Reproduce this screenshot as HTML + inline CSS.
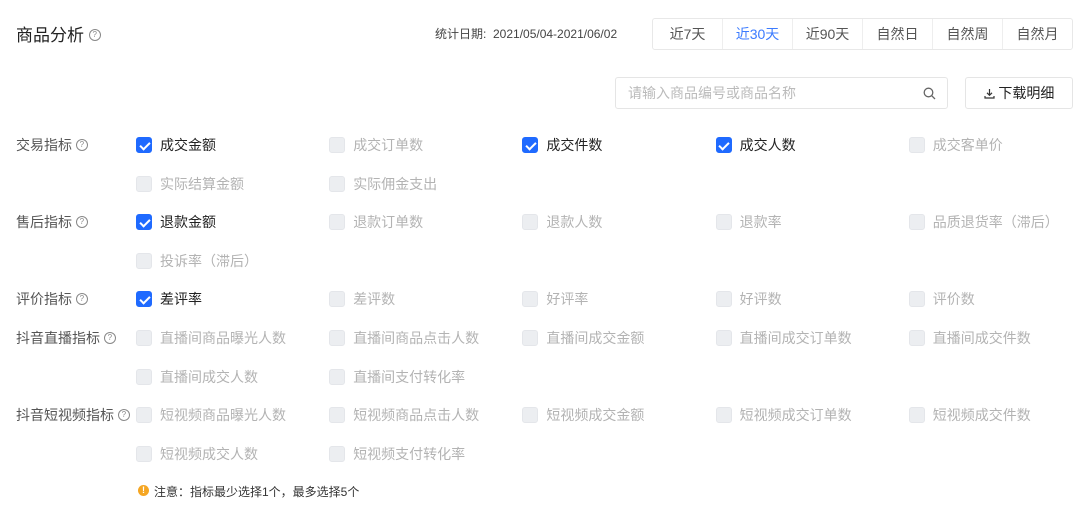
<!DOCTYPE html><html><head><meta charset="utf-8"><style>
body{margin:0;width:1080px;height:524px;background:#fff;font-family:"Liberation Sans","Noto Sans CJK SC",sans-serif;color:#333;position:relative;overflow:hidden}
.a{position:absolute;white-space:nowrap}
.q{display:inline-block;width:10px;height:10px;border:1px solid #888;border-radius:50%;font-size:8px;line-height:10px;text-align:center;color:#888;vertical-align:middle}
.cb{position:absolute;width:16px;height:16px;border-radius:3px;background:#eceef1;border:1px solid #e4e6ea;box-sizing:border-box}
.cb.on{background:#1f6aff;border-color:#1f6aff}
.cb.on:after{content:"";position:absolute;left:4.5px;top:1.5px;width:4px;height:8px;border:solid #fff;border-width:0 2px 2px 0;transform:rotate(45deg)}
.t{position:absolute;font-size:14px;color:#b3b3b3;line-height:16px}
.t.on{color:#222}
.lab{position:absolute;font-size:14px;color:#555;line-height:16px}
.seg{position:absolute;top:18px;height:32px;border:1px solid #e8e8e8;border-radius:3px;display:flex;left:652px;width:421px;box-sizing:border-box}
.seg div{flex:1;text-align:center;line-height:30px;font-size:14px;color:#555;border-left:1px solid #eee}
.seg div:first-child{border-left:0}
</style></head><body>
<div class="a" style="left:16px;top:21px;font-size:17px;color:#222">商品分析 <span class="q" style="margin-top:-3px">?</span></div>
<div class="a" style="left:435px;top:25px;font-size:12px;color:#444">统计日期:&nbsp; 2021/05/04-2021/06/02</div>
<div class="seg"><div>近7天</div><div style="color:#3b7bff">近30天</div><div>近90天</div><div>自然日</div><div>自然周</div><div>自然月</div></div>
<div class="a" style="left:615px;top:77px;width:333px;height:32px;border:1px solid #e5e5e5;border-radius:3px;box-sizing:border-box;font-size:14px;color:#bbb;line-height:30px;padding-left:12px">请输入商品编号或商品名称
<svg style="position:absolute;right:11px;top:9px" width="13" height="13" viewBox="0 0 13 13"><circle cx="5.5" cy="5.5" r="4.3" fill="none" stroke="#666" stroke-width="1.3"/><path d="M8.7 8.7L12 12" stroke="#666" stroke-width="1.3"/></svg></div>
<div class="a" style="left:965px;top:77px;width:108px;height:32px;border:1px solid #e5e5e5;border-radius:3px;box-sizing:border-box;font-size:14px;color:#222;line-height:30px;text-align:center">
<svg width="11" height="11" viewBox="0 0 11 11" style="vertical-align:-1px"><path d="M5.5 1V7M3 4.8L5.5 7.3L8 4.8M1 8V10H10V8" fill="none" stroke="#333" stroke-width="1.2"/></svg> 下载明细</div>
<div id="g"></div>
<div class="a" style="left:138px;top:485px;width:11px;height:11px;border-radius:50%;background:#f5a623;color:#fff;font-size:9px;line-height:11px;text-align:center;font-weight:bold">!</div>
<div class="a" style="left:154px;top:483px;font-size:12px;color:#333">注意：指标最少选择1个，最多选择5个</div>
<script>
var rows=[
[145,"交易指标",[["成交金额",1],["成交订单数"],["成交件数",1],["成交人数",1],["成交客单价"]]],
[184,"",[["实际结算金额"],["实际佣金支出"]]],
[222,"售后指标",[["退款金额",1],["退款订单数"],["退款人数"],["退款率"],["品质退货率（滞后）"]]],
[261,"",[["投诉率（滞后）"]]],
[299,"评价指标",[["差评率",1],["差评数"],["好评率"],["好评数"],["评价数"]]],
[338,"抖音直播指标",[["直播间商品曝光人数"],["直播间商品点击人数"],["直播间成交金额"],["直播间成交订单数"],["直播间成交件数"]]],
[377,"",[["直播间成交人数"],["直播间支付转化率"]]],
[415,"抖音短视频指标",[["短视频商品曝光人数"],["短视频商品点击人数"],["短视频成交金额"],["短视频成交订单数"],["短视频成交件数"]]],
[454,"",[["短视频成交人数"],["短视频支付转化率"]]]];
var h="";rows.forEach(function(r){var y=r[0];
if(r[1])h+='<div class="lab" style="left:16px;top:'+(y-8)+'px">'+r[1]+' <span class="q" style="margin-top:-2px">?</span></div>';
r[2].forEach(function(c,i){var x=136+i*193.2;var on=c[1]?" on":"";
h+='<div class="cb'+on+'" style="left:'+x+'px;top:'+(y-8)+'px"></div><div class="t'+on+'" style="left:'+(x+24)+'px;top:'+(y-8)+'px">'+c[0]+'</div>';});});
document.getElementById("g").innerHTML=h;
</script>
</body></html>
